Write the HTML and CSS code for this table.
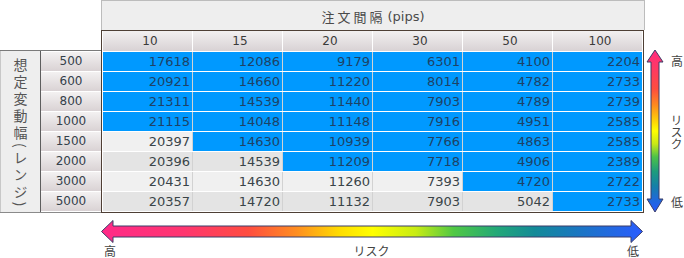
FILE: index.html
```html
<!DOCTYPE html>
<html lang="ja">
<head>
<meta charset="utf-8">
<title>注文間隔</title>
<link rel="stylesheet" href="styles.css">
</head>
<body>
<div class="chart">
  <div class="top">
    <div class="title"><span class="kanji">注文間隔</span> (pips)</div>
  </div>
  <div class="mid">
    <div class="side">
      <div class="axis-label"><span>想定変動幅(レンジ)</span></div>
      <div class="ranges">
        <div class="range">500</div>
        <div class="range">600</div>
        <div class="range">800</div>
        <div class="range">1000</div>
        <div class="range">1500</div>
        <div class="range">2000</div>
        <div class="range">3000</div>
        <div class="range">5000</div>
      </div>
    </div>
    <div class="grid">
      <div class="hd">10</div><div class="hd">15</div><div class="hd">20</div><div class="hd">30</div><div class="hd">50</div><div class="hd">100</div>
      <div class="c b">17618</div><div class="c b">12086</div><div class="c b">9179</div><div class="c b">6301</div><div class="c b">4100</div><div class="c b">2204</div>
      <div class="c b">20921</div><div class="c b">14660</div><div class="c b">11220</div><div class="c b">8014</div><div class="c b">4782</div><div class="c b">2733</div>
      <div class="c b">21311</div><div class="c b">14539</div><div class="c b">11440</div><div class="c b">7903</div><div class="c b">4789</div><div class="c b">2739</div>
      <div class="c b">21115</div><div class="c b">14048</div><div class="c b">11148</div><div class="c b">7916</div><div class="c b">4951</div><div class="c b">2585</div>
      <div class="c l">20397</div><div class="c b">14630</div><div class="c b">10939</div><div class="c b">7766</div><div class="c b">4863</div><div class="c b">2585</div>
      <div class="c d">20396</div><div class="c d">14539</div><div class="c b">11209</div><div class="c b">7718</div><div class="c b">4906</div><div class="c b">2389</div>
      <div class="c l">20431</div><div class="c l">14630</div><div class="c l">11260</div><div class="c l">7393</div><div class="c b">4720</div><div class="c b">2722</div>
      <div class="c d">20357</div><div class="c d">14720</div><div class="c d">11132</div><div class="c d">7903</div><div class="c d">5042</div><div class="c b">2733</div>
    </div>
    <div class="vscale">
      <svg class="varrow" width="20" height="183" viewBox="0 0 20 183">
        <defs>
          <linearGradient id="vg" gradientUnits="userSpaceOnUse" x1="0" y1="20" x2="0" y2="182">
            <stop offset="0" stop-color="#ff2a80"/>
            <stop offset="0.12" stop-color="#ff3a62"/>
            <stop offset="0.24" stop-color="#ff4d3e"/>
            <stop offset="0.34" stop-color="#ff8a1e"/>
            <stop offset="0.43" stop-color="#ffcc08"/>
            <stop offset="0.5" stop-color="#ffff00"/>
            <stop offset="0.58" stop-color="#c8e816"/>
            <stop offset="0.66" stop-color="#4cc248"/>
            <stop offset="0.75" stop-color="#1e9c7c"/>
            <stop offset="0.84" stop-color="#1580a8"/>
            <stop offset="0.92" stop-color="#1f6ad8"/>
            <stop offset="1" stop-color="#2657ff"/>
          </linearGradient>
        </defs>
        <path d="M10,20 L18,32 L14,32 L14,169 L18,169 L10,182 L2,169 L6,169 L6,32 L2,32 Z" fill="url(#vg)" stroke="#3b3d68" stroke-width="1" stroke-linejoin="miter"/>
      </svg>
      <div class="vlabels">
        <span>高</span>
        <span class="vtext">リスク</span>
        <span>低</span>
      </div>
    </div>
  </div>
  <div class="bottom">
    <svg class="harrow" width="544" height="25" viewBox="0 0 544 25">
      <defs>
        <linearGradient id="hg" gradientUnits="userSpaceOnUse" x1="2" y1="0" x2="543" y2="0">
          <stop offset="0" stop-color="#ff2a88"/>
          <stop offset="0.15" stop-color="#ff3570"/>
          <stop offset="0.27" stop-color="#ff4c40"/>
          <stop offset="0.36" stop-color="#ff8e20"/>
          <stop offset="0.44" stop-color="#ffdd00"/>
          <stop offset="0.5" stop-color="#ffff00"/>
          <stop offset="0.58" stop-color="#c8ec14"/>
          <stop offset="0.65" stop-color="#50c844"/>
          <stop offset="0.73" stop-color="#22a878"/>
          <stop offset="0.8" stop-color="#138a98"/>
          <stop offset="0.88" stop-color="#1a76c2"/>
          <stop offset="1" stop-color="#2a5cff"/>
        </linearGradient>
      </defs>
      <path d="M1.5,12.5 L13,1.5 L13,7 L531,7 L531,1.5 L542.5,12.5 L531,23.5 L531,18 L13,18 L13,23.5 Z" fill="url(#hg)" stroke="#3b3d68" stroke-width="1"/>
    </svg>
    <div class="hlabels">
      <span>高</span>
      <span>リスク</span>
      <span>低</span>
    </div>
  </div>
</div>
</body>
</html>
```

FILE: styles.css
```css
html, body {
  margin: 0;
  padding: 0;
  background: #ffffff;
}

body {
  font-family: "DejaVu Sans", "Noto Sans CJK JP", sans-serif;
  color: #333333;
}

.chart {
  width: 684px;
  height: 258px;
  overflow: hidden;
}

/* top title */
.top {
  height: 30px;
  padding-left: 101px;
}

.title {
  width: 542px;
  height: 27px;
  padding-top: 2px;
  border: 1px solid #bcbcbc;
  border-bottom: 0;
  background: #eeeeee;
  display: flex;
  align-items: center;
  justify-content: center;
  font-size: 13px;
  color: #4a4a4a;
}

.title .kanji {
  font-family: "Noto Sans CJK JP", sans-serif;
  letter-spacing: 3px;
  margin-right: 2px;
}

/* middle */
.mid {
  display: flex;
  height: 183px;
}

.side {
  width: 101px;
  height: 163px;
  box-sizing: border-box;
  margin-top: 20px;
  display: flex;
  border-top: 1px solid #7a7a7a;
  border-bottom: 1px solid #8a8a8a;
}

.axis-label {
  width: 39px;
  background: #eeeeee;
  border-left: 1px solid #c8c8c8;
  border-right: 1px solid #5e5e5e;
  display: flex;
  justify-content: center;
  align-items: flex-start;
  padding-top: 7px;
}

.axis-label span {
  writing-mode: vertical-rl;
  font-family: "Noto Sans CJK JP", sans-serif;
  font-size: 14px;
  line-height: 16px;
  letter-spacing: 3px;
  color: #555555;
}

.ranges {
  width: 60px;
  background: #ffffff;
  padding-top: 1px;
  display: grid;
  grid-template-rows: repeat(8, 19px);
  row-gap: 1px;
}

.range {
  background: linear-gradient(#f3f1f1, #d9d2d4);
  font-size: 12px;
  line-height: 19px;
  text-align: center;
  color: #34404a;
}

/* data grid */
.grid {
  width: 544px;
  height: 183px;
  box-sizing: border-box;
  border: 1px solid #4e3f35;
  background: #ffffff;
  padding: 0 1px 1px;
  display: grid;
  grid-template-columns: repeat(6, 1fr);
  grid-template-rows: 20px repeat(8, 19px);
  gap: 1px;
}

.hd {
  background: linear-gradient(#f2f0f0, #d8d2d4);
  font-size: 12px;
  line-height: 21px;
  text-align: center;
  padding-left: 5px;
  color: #3a3a3a;
}

.c {
  font-size: 13px;
  line-height: 20px;
  text-align: right;
  padding-right: 2px;
  color: #3a4448;
  box-shadow: 1px 0 0 #d2d2d2;
}

.grid > :nth-child(6n) {
  box-shadow: none;
}

.b {
  background: #0099ff;
  color: #1e4266;
}

.l {
  background: #f0f0f0;
}

.d {
  background: #e4e4e4;
}

/* right vertical scale */
.vscale {
  width: 39px;
  display: flex;
  margin-left: 1px;
}

.varrow {
  display: block;
  flex: none;
}

.vlabels {
  display: flex;
  flex-direction: column;
  justify-content: space-between;
  align-items: flex-start;
  padding: 24px 0 4px 6px;
  font-family: "Noto Sans CJK JP", sans-serif;
  font-size: 12px;
  line-height: 14px;
  color: #444444;
}

.vtext {
  writing-mode: vertical-rl;
  text-orientation: upright;
  line-height: 17px;
  margin-left: -3px;
}

/* bottom horizontal scale */
.bottom {
  padding-left: 100px;
}

.harrow {
  display: block;
  margin-top: 6px;
}

.hlabels {
  width: 544px;
  box-sizing: border-box;
  display: flex;
  justify-content: space-between;
  padding: 0 5px 0 4px;
  font-family: "Noto Sans CJK JP", sans-serif;
  font-size: 12px;
  line-height: 13px;
  color: #444444;
}
```
